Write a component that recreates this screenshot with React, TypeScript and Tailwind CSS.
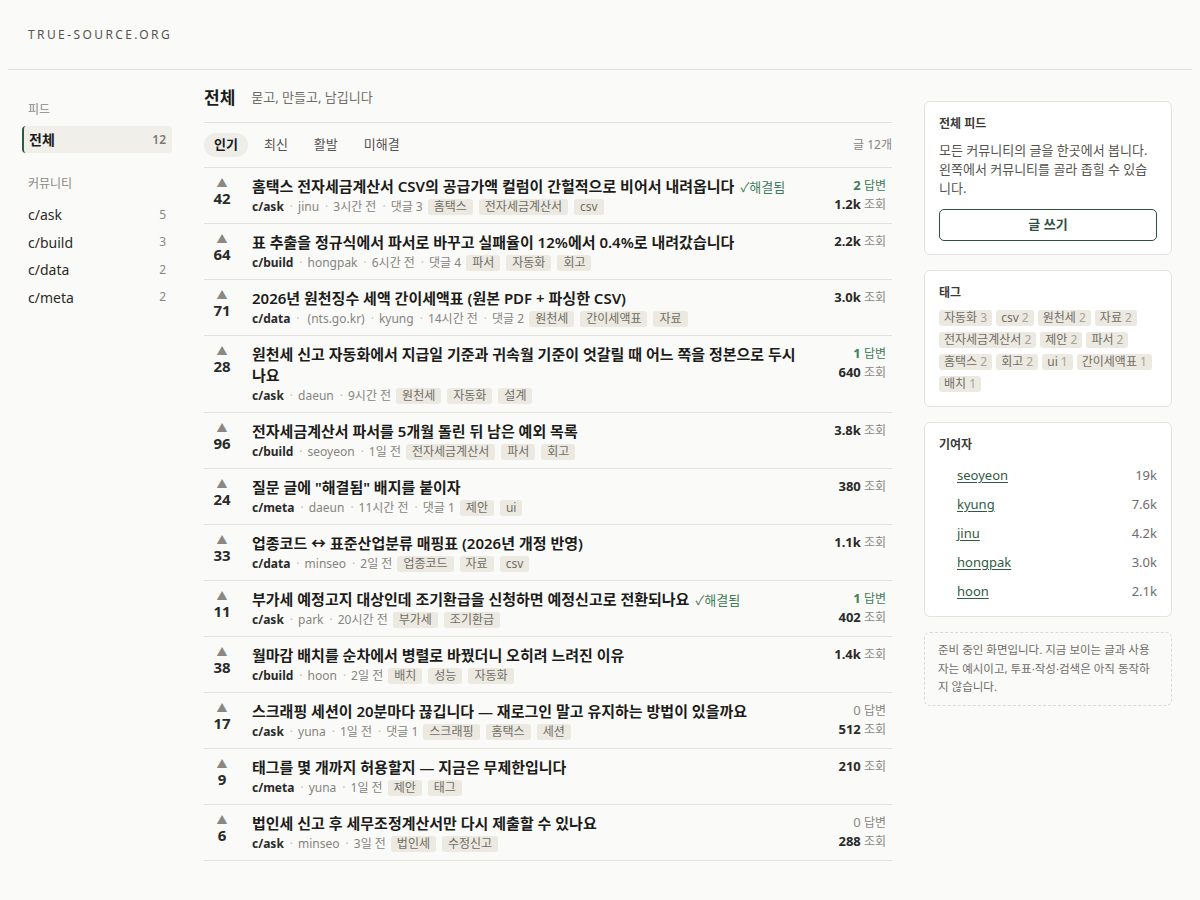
import React from "react";

type Post = {
  votes: number;
  title: string;
  resolved?: boolean;
  community: string;
  link?: string;
  author: string;
  time: string;
  comments?: number;
  tags: string[];
  answers?: number;
  views: string;
};

const posts: Post[] = [
  { votes: 42, title: "홈택스 전자세금계산서 CSV의 공급가액 컬럼이 간헐적으로 비어서 내려옵니다", resolved: true, community: "c/ask", author: "jinu", time: "3시간 전", comments: 3, tags: ["홈택스", "전자세금계산서", "csv"], answers: 2, views: "1.2k" },
  { votes: 64, title: "표 추출을 정규식에서 파서로 바꾸고 실패율이 12%에서 0.4%로 내려갔습니다", community: "c/build", author: "hongpak", time: "6시간 전", comments: 4, tags: ["파서", "자동화", "회고"], views: "2.2k" },
  { votes: 71, title: "2026년 원천징수 세액 간이세액표 (원본 PDF + 파싱한 CSV)", community: "c/data", link: "(nts.go.kr)", author: "kyung", time: "14시간 전", comments: 2, tags: ["원천세", "간이세액표", "자료"], views: "3.0k" },
  { votes: 28, title: "원천세 신고 자동화에서 지급일 기준과 귀속월 기준이 엇갈릴 때 어느 쪽을 정본으로 두시나요", community: "c/ask", author: "daeun", time: "9시간 전", tags: ["원천세", "자동화", "설계"], answers: 1, views: "640" },
  { votes: 96, title: "전자세금계산서 파서를 5개월 돌린 뒤 남은 예외 목록", community: "c/build", author: "seoyeon", time: "1일 전", tags: ["전자세금계산서", "파서", "회고"], views: "3.8k" },
  { votes: 24, title: "질문 글에 \"해결됨\" 배지를 붙이자", community: "c/meta", author: "daeun", time: "11시간 전", comments: 1, tags: ["제안", "ui"], views: "380" },
  { votes: 33, title: "업종코드 ↔ 표준산업분류 매핑표 (2026년 개정 반영)", community: "c/data", author: "minseo", time: "2일 전", tags: ["업종코드", "자료", "csv"], views: "1.1k" },
  { votes: 11, title: "부가세 예정고지 대상인데 조기환급을 신청하면 예정신고로 전환되나요", resolved: true, community: "c/ask", author: "park", time: "20시간 전", tags: ["부가세", "조기환급"], answers: 1, views: "402" },
  { votes: 38, title: "월마감 배치를 순차에서 병렬로 바꿨더니 오히려 느려진 이유", community: "c/build", author: "hoon", time: "2일 전", tags: ["배치", "성능", "자동화"], views: "1.4k" },
  { votes: 17, title: "스크래핑 세션이 20분마다 끊깁니다 — 재로그인 말고 유지하는 방법이 있을까요", community: "c/ask", author: "yuna", time: "1일 전", comments: 1, tags: ["스크래핑", "홈택스", "세션"], answers: 0, views: "512" },
  { votes: 9, title: "태그를 몇 개까지 허용할지 — 지금은 무제한입니다", community: "c/meta", author: "yuna", time: "1일 전", tags: ["제안", "태그"], views: "210" },
  { votes: 6, title: "법인세 신고 후 세무조정계산서만 다시 제출할 수 있나요", community: "c/ask", author: "minseo", time: "3일 전", tags: ["법인세", "수정신고"], answers: 0, views: "288" },
];

const communities = [
  { name: "c/ask", count: 5 },
  { name: "c/build", count: 3 },
  { name: "c/data", count: 2 },
  { name: "c/meta", count: 2 },
];

const sideTags: [string, number][] = [
  ["자동화", 3], ["csv", 2], ["원천세", 2], ["자료", 2], ["전자세금계산서", 2], ["제안", 2],
  ["파서", 2], ["홈택스", 2], ["회고", 2], ["ui", 1], ["간이세액표", 1], ["배치", 1],
];

const contributors: [string, string][] = [
  ["seoyeon", "19k"], ["kyung", "7.6k"], ["jinu", "4.2k"], ["hongpak", "3.0k"], ["hoon", "2.1k"],
];

function Dot() {
  return <span className="ml-[6px] mr-[5px] text-[#c4c2bc]">·</span>;
}

function Row({ p }: { p: Post }) {
  return (
    <li className="flex gap-3 border-b border-[#e4e2dd] pb-[7px] pr-1.5 pt-2">
      <div className="flex w-9 shrink-0 flex-col items-center pt-px">
        <span className="text-[11px] leading-[11px] text-[#8a8883]">▲</span>
        <span className="mt-px text-[15px] font-bold leading-[18px] text-[#2a2a28]">{p.votes}</span>
      </div>
      <div className="min-w-0 flex-1">
        <div className="text-[15px] font-semibold leading-[21px] text-[#1c1c1a]">
          {p.title}
          {p.resolved && (
            <span className="ml-1.5 text-[13px] font-normal leading-none text-[#3f7d5c]">✓해결됨</span>
          )}
        </div>
        <div className="mt-px flex h-[18px] items-center text-[12px] text-[#86847e]">
          <span className="font-bold text-[#2a2a28]">{p.community}</span>
          {p.link && (
            <>
              <Dot />
              <span className="ml-[3px]">{p.link}</span>
            </>
          )}
          <Dot />
          <span>{p.author}</span>
          <Dot />
          <span>{p.time}</span>
          {p.comments !== undefined && (
            <>
              <Dot />
              <span>댓글 {p.comments}</span>
            </>
          )}
          <span className="ml-[5px] flex gap-[6px]">
            {p.tags.map((t) => (
              <span key={t} className="h-4 rounded-[3px] bg-[#ece9e1] px-1.5 text-[12px] leading-4 text-[#6f6d67]">
                {t}
              </span>
            ))}
          </span>
        </div>
      </div>
      <div className="w-[72px] shrink-0 text-right text-[12px] leading-[19px]">
        {p.answers !== undefined && (
          <div className={p.answers > 0 ? "text-[#3f7d5c]" : "text-[#8a8883]"}>
            <span className={p.answers > 0 ? "text-[13px] font-bold" : "text-[13px]"}>{p.answers}</span> 답변
          </div>
        )}
        <div className="text-[#8a8883]">
          <span className="text-[13px] font-bold text-[#2a2a28]">{p.views}</span> 조회
        </div>
      </div>
    </li>
  );
}

export default function App() {
  return (
    <div className="min-h-screen bg-[#fafaf8] px-2 font-['Noto_Sans','Noto_Sans_CJK_KR',sans-serif] text-[#2a2a28]">
      <header className="flex h-[70px] items-center border-b border-[#e4e2dd] px-5 pt-px">
        <span className="text-[12px] tracking-[0.2em] text-[#55534e]">TRUE-SOURCE.ORG</span>
      </header>
      <div className="grid grid-cols-[144px_1fr_248px] gap-8 px-5 pb-10">
        {/* Left sidebar */}
        <aside className="pt-[32px]">
          <div className="text-[12px] leading-4 text-[#8a8883]">피드</div>
          <div className="-ml-1.5 mt-[8px] flex h-[27px] items-center justify-between rounded-[4px] border-l-2 border-[#2f5b45] bg-[#f1efea] pl-[5px] pr-1.5">
            <span className="text-[14px] font-bold text-[#1c1c1a]">전체</span>
            <span className="text-[12px] font-semibold text-[#7a7873]">12</span>
          </div>
          <div className="mt-[23px] text-[12px] leading-4 text-[#8a8883]">커뮤니티</div>
          <ul className="mt-[9px]">
            {communities.map((c) => (
              <li key={c.name} className="flex h-[27.5px] items-center justify-between pr-1.5">
                <span className="text-[14px] text-[#2a2a28]">{c.name}</span>
                <span className="text-[12px] text-[#8a8883]">{c.count}</span>
              </li>
            ))}
          </ul>
        </aside>

        {/* Main */}
        <main className="pt-4">
          <div className="flex items-center gap-4 border-b border-[#e4e2dd] pb-3">
            <h1 className="text-[17px] font-bold leading-6 text-[#1c1c1a]">전체</h1>
            <span className="text-[13px] text-[#6f6d67]">묻고, 만들고, 남깁니다</span>
          </div>
          <div className="flex items-center justify-between border-b border-[#e4e2dd] py-[10px]">
            <div className="flex gap-[6px]">
              <span className="flex h-6 items-center rounded-full bg-[#efede8] px-2.5 text-[13px] font-semibold text-[#1c1c1a]">인기</span>
              <span className="flex h-6 items-center px-2.5 text-[13px] text-[#55534e]">최신</span>
              <span className="flex h-6 items-center px-2.5 text-[13px] text-[#55534e]">활발</span>
              <span className="flex h-6 items-center px-2.5 text-[13px] text-[#55534e]">미해결</span>
            </div>
            <span className="text-[12px] text-[#86847e]">글 12개</span>
          </div>
          <ul>
            {posts.map((p, i) => (
              <Row key={i} p={p} />
            ))}
          </ul>
        </main>

        {/* Right sidebar */}
        <aside className="flex flex-col gap-[15px] pt-[31px]">
          <section className="rounded-md border border-[#e4e2dd] bg-white px-[14px] pb-[13px] pt-[14px]">
            <h2 className="text-[12px] font-bold leading-4 text-[#3a3a37]">전체 피드</h2>
            <p className="mt-[9px] text-[13px] leading-[19px] text-[#55534e]">
              모든 커뮤니티의 글을 한곳에서 봅니다. 왼쪽에서 커뮤니티를 골라 좁힐 수 있습니다.
            </p>
            <button className="mt-[11px] flex h-8 w-full items-center justify-center rounded-[5px] border border-[#2f4f43] text-[13px] font-bold text-[#2f4f43]">
              글 쓰기
            </button>
          </section>

          <section className="rounded-md border border-[#e4e2dd] bg-white px-[14px] pb-[14px] pt-[14px]">
            <h2 className="text-[12px] font-bold leading-4 text-[#3a3a37]">태그</h2>
            <div className="mt-[9px] flex flex-wrap gap-x-1 gap-y-1.5">
              {sideTags.map(([t, n]) => (
                <span key={t} className="h-4 rounded-[3px] bg-[#ece9e1] px-[5px] text-[12px] leading-4 text-[#6f6d67]">
                  {t} <span className="text-[#a5a39d]">{n}</span>
                </span>
              ))}
            </div>
          </section>

          <section className="rounded-md border border-[#e4e2dd] bg-white px-[14px] pb-[10px] pt-[14px]">
            <h2 className="text-[12px] font-bold leading-4 text-[#3a3a37]">기여자</h2>
            <ol className="mt-2 pl-[18px]">
              {contributors.map(([n, v]) => (
                <li key={n} className="flex h-[29px] items-center justify-between text-[13px]">
                  <span className="text-[#2f5b45] underline underline-offset-2">{n}</span>
                  <span className="text-[#6f6d67]">{v}</span>
                </li>
              ))}
            </ol>
          </section>

          <section className="rounded-md border border-dashed border-[#dcdad4] px-[13px] py-[8px] text-[11.5px] leading-[18.5px] text-[#6f6d67]">
            준비 중인 화면입니다. 지금 보이는 글과 사용자는 예시이고, 투표·작성·검색은 아직 동작하지 않습니다.
          </section>
        </aside>
      </div>
    </div>
  );
}
